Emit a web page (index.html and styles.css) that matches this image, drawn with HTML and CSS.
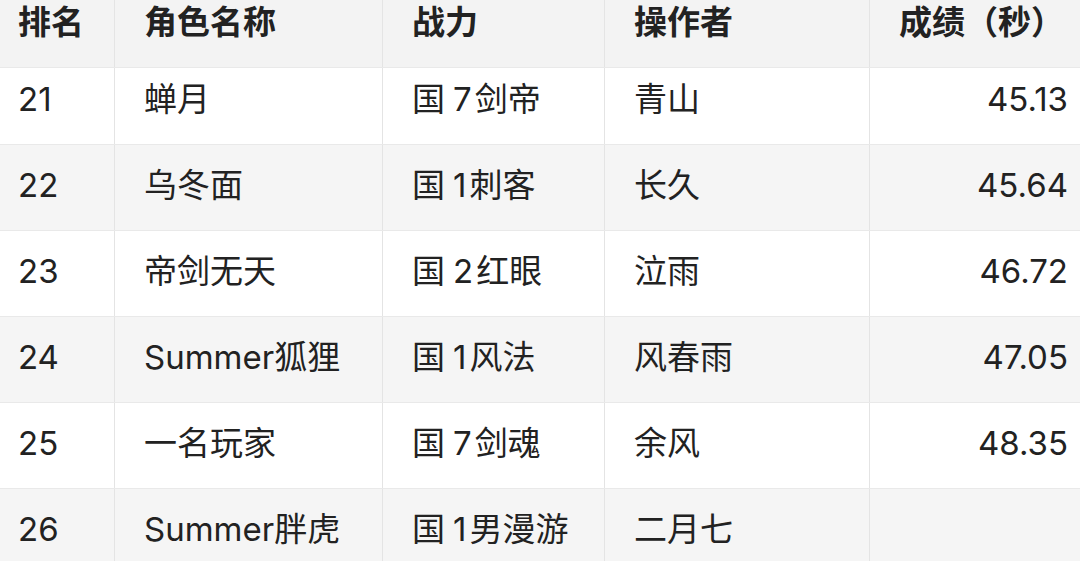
FILE: index.html
```html
<!DOCTYPE html>
<html lang="zh-CN">
<head>
<meta charset="utf-8">
<link rel="stylesheet" href="styles.css">
</head>
<body>
<div class="table">
  <div class="row head">
    <div class="cell">排名</div>
    <div class="cell">角色名称</div>
    <div class="cell">战力</div>
    <div class="cell">操作者</div>
    <div class="cell num">成绩（秒）</div>
  </div>
  <div class="row first">
    <div class="cell">21</div>
    <div class="cell">蝉月</div>
    <div class="cell">国<span class="d">7</span>剑帝</div>
    <div class="cell">青山</div>
    <div class="cell num">45.13</div>
  </div>
  <div class="row alt">
    <div class="cell">22</div>
    <div class="cell">乌冬面</div>
    <div class="cell">国<span class="d">1</span>刺客</div>
    <div class="cell">长久</div>
    <div class="cell num">45.64</div>
  </div>
  <div class="row">
    <div class="cell">23</div>
    <div class="cell">帝剑无天</div>
    <div class="cell">国<span class="d">2</span>红眼</div>
    <div class="cell">泣雨</div>
    <div class="cell num">46.72</div>
  </div>
  <div class="row alt">
    <div class="cell">24</div>
    <div class="cell">Summer狐狸</div>
    <div class="cell">国<span class="d">1</span>风法</div>
    <div class="cell">风春雨</div>
    <div class="cell num">47.05</div>
  </div>
  <div class="row">
    <div class="cell">25</div>
    <div class="cell">一名玩家</div>
    <div class="cell">国<span class="d">7</span>剑魂</div>
    <div class="cell">余风</div>
    <div class="cell num">48.35</div>
  </div>
  <div class="row alt">
    <div class="cell">26</div>
    <div class="cell">Summer胖虎</div>
    <div class="cell">国<span class="d">1</span>男漫游</div>
    <div class="cell">二月七</div>
    <div class="cell num"></div>
  </div>
</div>
</body>
</html>
```

FILE: styles.css
```css
html, body {
  margin: 0;
  padding: 0;
  background: #ffffff;
}
body {
  width: 1080px;
  height: 561px;
  overflow: hidden;
  font-family: Inter, "Noto Sans CJK SC", sans-serif;
  font-size: 33px;
  color: #222222;
}
.table {
  display: flex;
  flex-direction: column;
}
.row {
  display: grid;
  grid-template-columns: 115px 268px 222px 265px 1fr;
  height: 86px;
  background: #ffffff;
  border-bottom: 1px solid #e9e9e9;
  box-sizing: border-box;
}
.row.alt {
  background: #f5f5f5;
}
.row.head {
  height: 68px;
  background: #f3f3f3;
  font-weight: 700;
}
.row.first {
  height: 77px;
}
.cell {
  border-right: 1px solid #e4e4e4;
  padding: 18px 0 0 29px;
  line-height: 44px;
  white-space: nowrap;
}
.cell:first-child {
  padding-left: 18px;
}
.cell:last-child {
  border-right: none;
}
.head .cell {
  padding-top: 0;
}
.first .cell {
  padding-top: 9px;
}
.cell.num {
  text-align: right;
  padding-right: 12px;
}
.head .cell.num {
  text-align: left;
  padding-left: 29px;
}
.d {
  margin: 0 3px 0 8px;
}
```
